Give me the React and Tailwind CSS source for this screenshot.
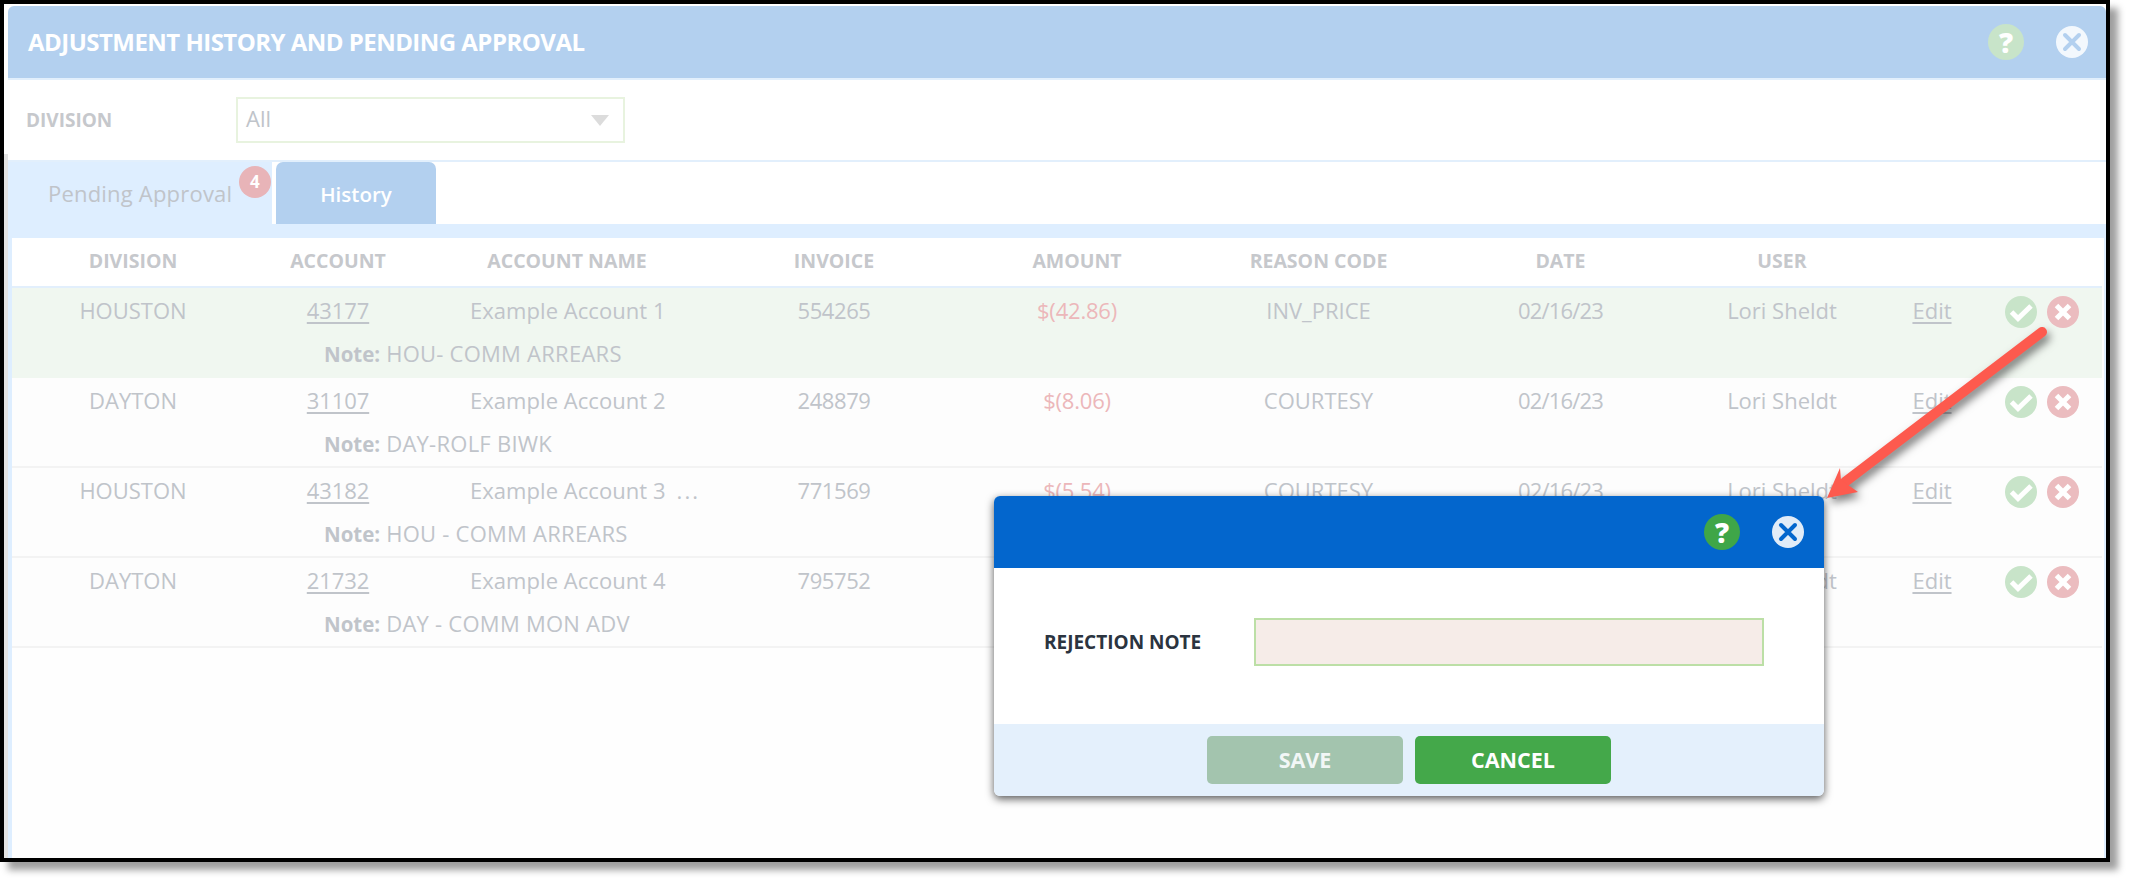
import React from "react";

const cols = "grid grid-cols-[242px_168px_290px_244px_242px_241px_243px_200px_100px_118px]";
const rows = [
  { div: "HOUSTON", acct: "43177", name: "Example Account 1", inv: "554265", amt: "$(42.86)", code: "INV_PRICE", note: "HOU- COMM ARREARS", on: true },
  { div: "DAYTON", acct: "31107", name: "Example Account 2", inv: "248879", amt: "$(8.06)", code: "COURTESY", note: "DAY-ROLF BIWK" },
  { div: "HOUSTON", acct: "43182", name: "Example Account 3", more: true, inv: "771569", amt: "$(5.54)", code: "COURTESY", note: "HOU - COMM ARREARS" },
  { div: "DAYTON", acct: "21732", name: "Example Account 4", inv: "795752", amt: "$(3.18)", code: "COURTESY", note: "DAY - COMM MON ADV" },
];
const heads = ["DIVISION", "ACCOUNT", "ACCOUNT NAME", "INVOICE", "AMOUNT", "REASON CODE", "DATE", "USER", "", ""];

function Help({ bg, mark }) {
  return (
    <span className={`flex h-9 w-9 items-center justify-center rounded-full text-[28px] font-extrabold leading-none ${bg} ${mark}`}>?</span>
  );
}

function Close({ bg, stroke }) {
  return (
    <svg width="32" height="32" viewBox="0 0 32 32" aria-hidden="true">
      <circle cx="16" cy="16" r="16" fill={bg} />
      <path d="M9 9 L23 23 M23 9 L9 23" stroke={stroke} strokeWidth="4" strokeLinecap="round" />
    </svg>
  );
}

function Approve() {
  return (
    <svg width="32" height="32" viewBox="0 0 32 32" aria-hidden="true">
      <circle cx="16" cy="16" r="16" fill="#c8e4c9" />
      <path d="M6.5 16 L13 22.5 L26 10" fill="none" stroke="#ffffff" strokeWidth="5" />
    </svg>
  );
}

function Reject() {
  return (
    <svg width="32" height="32" viewBox="0 0 32 32" aria-hidden="true">
      <circle cx="16" cy="16" r="16" fill="#ebbcbf" />
      <path d="M9.5 9.5 L22.5 22.5 M22.5 9.5 L9.5 22.5" stroke="#ffffff" strokeWidth="5" />
    </svg>
  );
}

function Row({ r }) {
  return (
    <div className={`h-[90px] pt-[1px] text-[22px] text-[#c0c4ca] ${r.on ? "bg-[#f0f7f0]" : "border-b-2 border-[#f3f3f3] bg-[#fdfdfd]"}`}>
      <div className={`${cols} h-[42px] items-center text-center`}>
        <span>{r.div}</span>
        <span className="tracking-[-0.1px] underline underline-offset-3">{r.acct}</span>
        <span className="flex gap-[11px] pl-[48px] text-left">
          <span className="tracking-[0.05px]">{r.name}</span>
          {r.more && <span className="tracking-[2px]">...</span>}
        </span>
        <span className="tracking-[-0.4px]">{r.inv}</span>
        <span className="tracking-[-0.2px] text-[#ecb7ba]">{r.amt}</span>
        <span>{r.code}</span>
        <span className="tracking-[-0.8px]">02/16/23</span>
        <span>Lori Sheldt</span>
        <span className="underline underline-offset-3">Edit</span>
        <span className="flex translate-y-[2px] items-center gap-[10px] pl-[23px]">
          <Approve />
          <Reject />
        </span>
      </div>
      <div className="flex h-[44px] items-center pl-[312px]">
        <span className="tracking-[0.25px]"><b className="text-[20.5px] font-bold tracking-normal">Note:</b> {r.note}</span>
      </div>
    </div>
  );
}

export default function App() {
  return (
    <div className="relative h-[882px] w-[2130px] overflow-hidden bg-white font-['Open_Sans','Liberation_Sans',sans-serif]">
      <div className="flex h-[862px] w-[2110px] border-4 border-black bg-white shadow-[8px_8px_7px_rgba(0,0,0,0.38)]">
        <div className="mt-[150px] w-[4px] bg-[#e3e3e3]" />
        <div className="w-[2098px] pt-[2px]">
          <div className="flex h-[72px] items-center justify-between rounded-t-[6px] bg-[#b3d0ef] pl-[20px] pr-[18px]">
            <h1 className="text-[24px] font-bold tracking-[-0.53px] text-white">ADJUSTMENT HISTORY AND PENDING APPROVAL</h1>
            <div className="flex items-center gap-[32px]">
              <Help bg="bg-[#c8e4c9]" mark="text-white" />
              <Close bg="#f3f8fd" stroke="#b3d0ef" />
            </div>
          </div>
          <div className="flex h-[84px] items-center border-y-2 border-[#e2effc] bg-white pl-[18px]">
            <span className="w-[210px] text-[19px] font-bold text-[#c6c8cc]">DIVISION</span>
            <div className="flex h-[46px] w-[389px] items-center justify-between border-2 border-[#e8f3df] pl-[8px] pr-[14px] text-[22px] text-[#c0c4ca]">
              <span className="-translate-y-[2px]">All</span>
              <svg width="18" height="12" viewBox="0 0 18 12" aria-hidden="true">
                <path d="M0 1 H18 L9 12 Z" fill="#dcdcdc" />
              </svg>
            </div>
          </div>
          <div className="flex h-[62px] bg-white">
            <div className="relative flex w-[264px] items-center bg-[#deeeff] pl-[40px] text-[22px] tracking-[0.2px] text-[#c0c4ca]">
              Pending Approval
              <span className="absolute left-[231px] top-[4px] flex h-[32px] w-[32px] items-center justify-center rounded-full bg-[#e8b4b8] text-[17px] font-bold text-white">4</span>
            </div>
            <div className="ml-[4px] flex w-[160px] items-center justify-center rounded-t-[7px] bg-[#b3d0ef] pt-[2px] text-[20.5px] font-semibold text-white">History</div>
          </div>
          <div className="h-[634px] border-r-2 border-l-4 border-t-[14px] border-[#deeeff] bg-[#fefefe] pr-[2px]">
            <div className={`${cols} h-[50px] items-center border-b-2 border-[#e2effc] bg-white pb-[2px] text-center text-[19.5px] font-bold text-[#c6c8cc]`}>
              {heads.map((h, i) => (
                <span key={i}>{h}</span>
              ))}
            </div>
            {rows.map((r) => (
              <Row key={r.acct} r={r} />
            ))}
          </div>
        </div>
      </div>

      <svg className="absolute left-[1810px] top-[320px] overflow-visible" width="250" height="190" viewBox="1810 320 250 190" aria-hidden="true">
        <g style={{ filter: "drop-shadow(3px 5px 4px rgba(0,0,0,0.5))" }}>
          <path d="M2042 332 L1845 482" stroke="#fd5a4e" strokeWidth="10" strokeLinecap="round" />
          <path d="M1827 498 L1840 468 L1841 480 L1858 492 Z" fill="#fd5a4e" />
        </g>
      </svg>

      <div className="absolute left-[994px] top-[496px] flex h-[300px] w-[830px] flex-col overflow-hidden rounded-[6px] bg-white shadow-[0_3px_9px_rgba(0,0,0,0.65)]">
        <div className="flex h-[72px] items-center justify-end gap-[32px] bg-[#0366cd] pr-[20px]">
          <Help bg="bg-[#3fa648]" mark="text-white" />
          <Close bg="#e1ecf8" stroke="#0366cd" />
        </div>
        <div className="flex h-[156px] items-center pb-[8px] pl-[50px]">
          <span className="w-[210px] text-[19px] font-bold text-[#2b3440]">REJECTION NOTE</span>
          <div className="h-[48px] w-[510px] border-2 border-[#bcdfa6] bg-[#f6ece8]" />
        </div>
        <div className="flex h-[72px] items-center gap-[12px] bg-[#e4f0fc] pl-[213px]">
          <button className="h-[48px] w-[196px] rounded-[5px] bg-[#a3c4ae] text-[21.5px] font-bold text-[#f2f7f6]">SAVE</button>
          <button className="h-[48px] w-[196px] rounded-[5px] bg-[#44a84a] text-[21.5px] font-bold text-white">CANCEL</button>
        </div>
      </div>
    </div>
  );
}
